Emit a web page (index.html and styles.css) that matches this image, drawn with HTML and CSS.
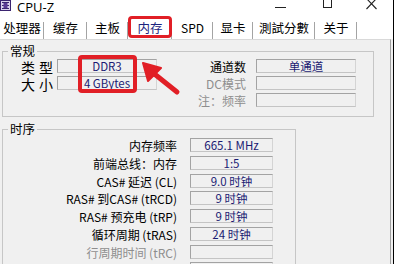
FILE: index.html
```html
<!DOCTYPE html>
<html lang="zh-CN">
<head>
<meta charset="utf-8">
<title>CPU-Z</title>
<link rel="stylesheet" href="styles.css">
</head>
<body>
<div class="screen">
  <div class="window">
    <div class="titlebar">
      <svg class="appicon" viewBox="0 0 11 11" width="11" height="11">
        <rect x="0.5" y="0.5" width="10" height="10" fill="#d9d0ea" stroke="#3b2470"/>
        <path d="M2 2.5h7M2 5.5h7M2 8.5h7" stroke="#3b2470" stroke-width="1"/>
        <rect x="3.5" y="3" width="4" height="5" fill="#5a3a94"/>
      </svg>
      <span class="title">CPU-Z</span>
      <svg class="controls" viewBox="0 0 138 15" width="138" height="15">
        <path d="M20 7.5h11" stroke="#222" stroke-width="1"/>
        <rect x="68.5" y="-1.5" width="8" height="9" fill="none" stroke="#222" stroke-width="1"/>
        <path d="M111.5 -1.5L121.5 9M121.5 -1.5L111.5 9" stroke="#222" stroke-width="1.1"/>
      </svg>
    </div>
    <div class="tabs">
      <div class="tab">处理器</div>
      <div class="tab">缓存</div>
      <div class="tab">主板</div>
      <div class="tab active">内存</div>
      <div class="tab latin">SPD</div>
      <div class="tab">显卡</div>
      <div class="tab">測試分數</div>
      <div class="tab">关于</div>
    </div>
    <div class="panel">
      <fieldset class="group general">
        <legend>常规</legend>
        <div class="ggrid">
          <span class="lbl">类型</span>
          <span class="field">DDR3</span>
          <span class="lbl2">通道数</span>
          <span class="field">单通道</span>

          <span class="lbl">大小</span>
          <span class="field">4 GBytes</span>
          <span class="lbl2 dim">DC模式</span>
          <span class="field"></span>

          <span></span>
          <span></span>
          <span class="lbl2 dim">注：频率</span>
          <span class="field"></span>
        </div>
      </fieldset>
      <fieldset class="group timing">
        <legend>时序</legend>
        <div class="tgrid">
          <span class="tlbl">内存频率</span>
          <span class="field">665.1 MHz</span>
          <span class="tlbl">前端总线：内存</span>
          <span class="field">1:5</span>
          <span class="tlbl">CAS# 延迟 (CL)</span>
          <span class="field">9.0 时钟</span>
          <span class="tlbl">RAS# 到CAS# (tRCD)</span>
          <span class="field">9 时钟</span>
          <span class="tlbl">RAS# 预充电 (tRP)</span>
          <span class="field">9 时钟</span>
          <span class="tlbl">循环周期 (tRAS)</span>
          <span class="field">24 时钟</span>
          <span class="tlbl dim">行周期时间 (tRC)</span>
          <span class="field"></span>
          <span class="tlbl"></span>
          <span class="field"></span>
        </div>
      </fieldset>
    </div>
  </div>
  <div class="mark mark-tab"></div>
  <div class="mark mark-type"></div>
  <svg class="arrow" viewBox="0 0 40 34" width="40" height="34">
    <polygon points="1,1 19,6 6,19" fill="#e11f26" stroke="#e11f26" stroke-width="2" stroke-linejoin="round"/>
    <path d="M10 10L35 30" stroke="#e11f26" stroke-width="5" stroke-linecap="round"/>
  </svg>
</div>
</body>
</html>
```

FILE: styles.css
```css
* {
  box-sizing: border-box;
}

html,
body {
  margin: 0;
  padding: 0;
}

body {
  width: 403px;
  height: 264px;
  overflow: hidden;
  background: #ffffff;
  font-family: "Noto Sans CJK SC", "Noto Sans", sans-serif;
  font-size: 12px;
  color: #000000;
}

.screen {
  position: relative;
  width: 403px;
  height: 264px;
  overflow: hidden;
}

.window {
  width: 394px;
  height: 264px;
  border-right: 1px solid #000000;
  background: #f0f0f0;
  display: flex;
  flex-direction: column;
  overflow: hidden;
}

/* title bar */
.titlebar {
  flex: none;
  height: 15px;
  background: #ffffff;
  display: flex;
  align-items: flex-start;
}

.appicon {
  flex: none;
  display: block;
}

.title {
  font-family: "Open Sans", "Noto Sans", sans-serif;
  font-size: 13px;
  line-height: 15px;
  margin-left: 6px;
  color: #000000;
}

.controls {
  flex: none;
  margin-left: auto;
  display: block;
}

/* tabs */
.tabs {
  flex: none;
  height: 24px;
  background: #ffffff;
  display: flex;
  align-items: flex-end;
}

.tab {
  height: 22px;
  font-size: 12.5px;
  line-height: 22px;
  text-align: center;
  white-space: nowrap;
  background: linear-gradient(#a4a4a4, #a4a4a4) right bottom / 1px 17px no-repeat;
}

.tab:nth-child(1) { width: 44px; }
.tab:nth-child(2) { width: 43px; }
.tab:nth-child(3) { width: 41px; }
.tab:nth-child(4) { width: 44px; }
.tab:nth-child(5) { width: 41px; }
.tab:nth-child(6) { width: 40px; }
.tab:nth-child(7) { width: 62px; }
.tab:nth-child(8) { width: 42px; }

.tab.latin {
  font-size: 12px;
}

.tab.active {
  background-color: #ffffff;
  color: #1c237e;
}

/* panel */
.panel {
  flex: 1;
  width: 391px;
  background: #f0f0f0;
  border-top: 1px solid #d9d9d9;
  border-right: 1px solid #a0a0a0;
  padding: 4px 0 0 2px;
  display: flex;
  flex-direction: column;
  align-items: flex-start;
  gap: 5px;
}

.group {
  margin: 0;
  border: 1px solid #c6c6c6;
  min-inline-size: 0;
}

.group legend {
  padding: 0 2px;
  margin-left: 5px;
  font-size: 12.5px;
  line-height: 14px;
}

.general {
  flex: none;
  width: 372px;
  padding: 1px 0 9px 0;
}

.timing {
  flex: none;
  width: 294px;
  padding: 2px 0 20px 0;
}

.ggrid {
  display: grid;
  grid-template-columns: 54px 100px 99px 100px;
  grid-auto-rows: 14px;
  row-gap: 3px;
}

.tgrid {
  display: grid;
  grid-template-columns: 174px 83px;
  column-gap: 13px;
  grid-auto-rows: 14px;
  row-gap: 3.75px;
}

.lbl2,
.tlbl {
  line-height: 14px;
  padding-top: 1px;
  white-space: nowrap;
}

.lbl {
  font-size: 14px;
  line-height: 14px;
  padding-top: 1px;
  padding-left: 18px;
  letter-spacing: 4px;
  white-space: nowrap;
}

.lbl2 {
  text-align: right;
  padding-right: 10px;
}

.tlbl {
  text-align: right;
}

.dim {
  color: #8e8e8e;
}

.field {
  border: 1px solid;
  border-color: #a3a3a3 #d4d4d4 #c4c4c4 #a3a3a3;
  background: #f0f0f0;
  color: #1b1b73;
  text-align: center;
  font-size: 11.5px;
  line-height: 12px;
  white-space: nowrap;
}

/* red annotation marks */
.mark {
  position: absolute;
  border: 3.5px solid #e11f26;
  border-radius: 4px;
}

.mark-tab {
  left: 128px;
  top: 16px;
  width: 44px;
  height: 22px;
}

.mark-type {
  left: 78px;
  top: 55px;
  width: 59px;
  height: 38px;
  border-width: 4px;
}

.arrow {
  position: absolute;
  left: 142px;
  top: 62px;
}
```
